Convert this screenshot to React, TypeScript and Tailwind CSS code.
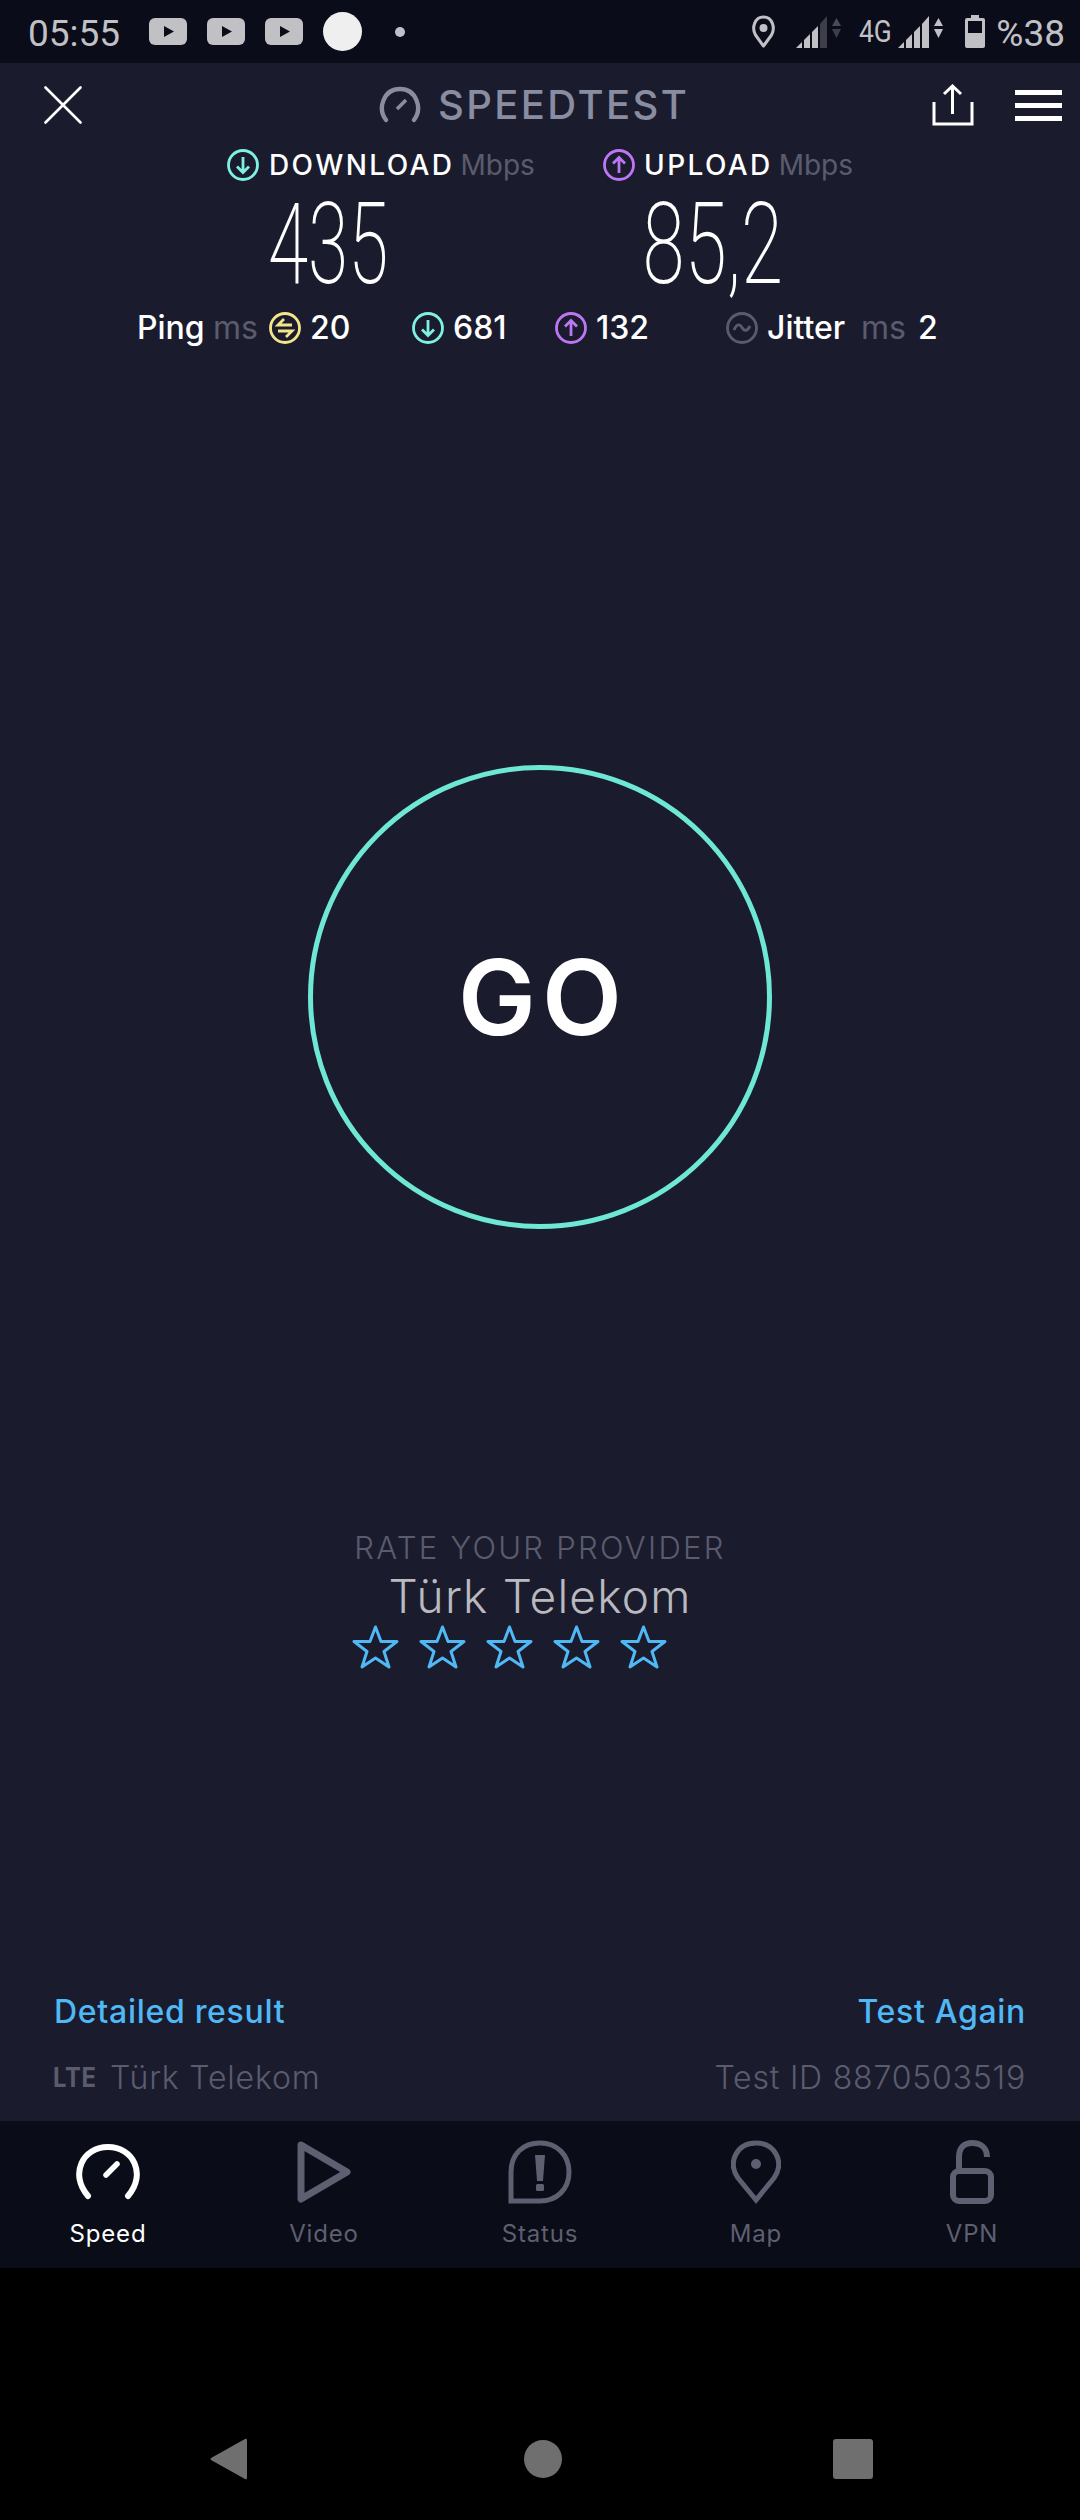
import type { ReactNode } from "react";

const SANS = "font-['Inter','Noto_Sans',sans-serif]";

function YoutubeBadge() {
    return (
        <svg width="38" height="27" viewBox="0 0 38 27">
            <rect width="38" height="27" rx="6" fill="#c1c0c5" />
            <path d="M15 8 L25 13.5 L15 19 Z" fill="#0a0c1a" />
        </svg>
    );
}

function Signal({ dimLast, dimArrows }: { dimLast?: boolean; dimArrows?: boolean }) {
    return (
        <svg width="46" height="33" viewBox="0 0 46 33">
            <path d="M0 33 L6 27 L6 33 Z" fill="#c1c0c5" />
            <path d="M8 33 L8 25 L14 19 L14 33 Z" fill="#c1c0c5" />
            <path d="M16 33 L16 17 L22 11 L22 33 Z" fill="#c1c0c5" />
            <path d="M24 33 L24 9 L31 1 L31 33 Z" fill={dimLast ? "#3d3e48" : "#c1c0c5"} />
            <path d="M36 11 L40.5 3 L45 11 Z" fill={dimArrows ? "#4a4b55" : "#c1c0c5"} />
            <path d="M36 14 L45 14 L40.5 23 Z" fill={dimArrows ? "#3d3e48" : "#c1c0c5"} />
        </svg>
    );
}

function StatusBar() {
    return (
        <div className="h-[63px] shrink-0 bg-[#0a0c1a] flex items-center pl-[28px] pr-[15px] font-['Roboto',sans-serif] text-[#c1c0c5]">
            <span className="text-[37px] leading-none w-[121px] mt-[3px]">05:55</span>
            <div className="flex items-center gap-[20px]">
                <YoutubeBadge />
                <YoutubeBadge />
                <YoutubeBadge />
            </div>
            <div className="w-[39px] h-[39px] rounded-full bg-[#efefef] ml-[20px]" />
            <div className="w-[10px] h-[10px] rounded-full bg-[#c1c0c5] ml-[33px]" />
            <div className="flex-1" />
            <svg width="25" height="33" viewBox="0 0 25 33" fill="none">
                <path d="M12.5 31 L4.5 20 C0.5 13 3.5 2 12.5 2 C21.5 2 24.5 13 20.5 20 Z" stroke="#c1c0c5" strokeWidth="3" strokeLinejoin="round" />
                <circle cx="12.5" cy="13" r="4" fill="#c1c0c5" />
            </svg>
            <div className="ml-[20px]">
                <Signal dimLast dimArrows />
            </div>
            <span className="text-[31px] leading-none ml-[17px] w-[39px] scale-x-[0.85] origin-left">4G</span>
            <Signal />
            <svg className="ml-[21px]" width="20" height="33" viewBox="0 0 20 33">
                <path d="M6 0 H14 V3 H18 Q20 3 20 5 V31 Q20 33 18 33 H2 Q0 33 0 31 V5 Q0 3 2 3 H6 Z" fill="#c1c0c5" />
                <rect x="3" y="6" width="14" height="12" fill="#0a0c1a" />
            </svg>
            <span className="text-[37px] leading-none ml-[11px] mt-[3px]">%38</span>
        </div>
    );
}

function RoundIcon({ color, children }: { color: string; children: ReactNode }) {
    return (
        <svg width="32" height="32" viewBox="0 0 32 32" fill="none" stroke={color} strokeWidth="2.8" className="shrink-0">
            <circle cx="16" cy="16" r="14.5" />
            {children}
        </svg>
    );
}

const DownIcon = () => (
    <RoundIcon color="#7ff0e2">
        <path d="M16 8 V23 M10 17.5 L16 23.5 L22 17.5" />
    </RoundIcon>
);

const UpIcon = () => (
    <RoundIcon color="#bd77f2">
        <path d="M16 24 V9 M10 14.5 L16 8.5 L22 14.5" />
    </RoundIcon>
);

function Header() {
    return (
        <div className="h-[70px] flex items-center pt-[13px] pl-[44px] pr-[18px]">
            <svg width="38" height="38" viewBox="0 0 38 38" stroke="#fff" strokeWidth="2.6" strokeLinecap="round">
                <path d="M1.5 1.5 L36.5 36.5 M36.5 1.5 L1.5 36.5" />
            </svg>
            <div className="flex-1 flex items-center pl-[297px]">
                <svg width="42" height="37" viewBox="0 0 42 37" fill="none" stroke="#8a8c9f" strokeWidth="4.4" strokeLinecap="round">
                    <path d="M7 34 C-2 22 5 3 21 3 C37 3 44 22 35 34" />
                    <path d="M18 23 L27 14" strokeWidth="3.6" strokeLinecap="butt" />
                </svg>
                <span className={`${SANS} text-[40px] leading-none font-medium text-[#8a8c9f] ml-[17px] tracking-[2.4px]`}>SPEEDTEST</span>
            </div>
            <svg width="42" height="42" viewBox="0 0 42 42" fill="none" stroke="#fff" strokeWidth="3">
                <path d="M2 18 V40 H40 V18" />
                <path d="M20.5 30 V3 M12 10 L20.5 2 L29 10" />
            </svg>
            <div className="w-[47px] ml-[41px] flex flex-col gap-[8px] mt-[1px]">
                <div className="h-[5px] bg-white" />
                <div className="h-[5px] bg-white" />
                <div className="h-[5px] bg-white" />
            </div>
        </div>
    );
}

function SpeedLabels() {
    return (
        <div className={`${SANS} flex items-center pl-[227px] mt-[16px] text-[28px] leading-[32px] font-medium text-white`}>
            <div className="w-[376px] flex items-center">
                <DownIcon />
                <span className="ml-[10px] tracking-[2.4px]">DOWNLOAD</span>
                <span className="ml-[6px] font-normal text-[#5a5c6e]">Mbps</span>
            </div>
            <UpIcon />
            <span className="ml-[9px] tracking-[2.4px]">UPLOAD</span>
            <span className="ml-[6px] font-normal text-[#5a5c6e]">Mbps</span>
        </div>
    );
}

function BigNumbers() {
    return (
        <div className="flex pl-[128px] mt-[8px] h-[110px] font-['Roboto',sans-serif] font-extralight text-white text-[114px] leading-[110px]">
            <div className="w-[400px] flex justify-center">
                <span className="scale-x-[0.64]">435</span>
            </div>
            <div className="w-[370px] flex justify-center">
                <span className="scale-x-[0.67]">85,2</span>
            </div>
        </div>
    );
}

function StatsRow() {
    return (
        <div className={`${SANS} flex items-center pl-[137px] mt-[12px] text-[32px] leading-[34px] font-medium text-white`}>
            <span className="w-[76px]">Ping</span>
            <span className="w-[56px] font-normal text-[#5a5c6e]">ms</span>
            <RoundIcon color="#f5e58a">
                <path d="M23 13 H9 L15 7 M9 19 H23 L17 25" />
            </RoundIcon>
            <span className="ml-[9px] w-[102px]">20</span>
            <DownIcon />
            <span className="ml-[9px] w-[102px]">681</span>
            <UpIcon />
            <span className="ml-[9px] w-[130px]">132</span>
            <RoundIcon color="#5a5c6e">
                <path d="M8 18 C11 11 14 12 16 15.5 C18 19 21 20 24 14" />
            </RoundIcon>
            <span className="ml-[9px] w-[94px]">Jitter</span>
            <span className="w-[57px] font-normal text-[#5a5c6e]">ms</span>
            <span>2</span>
        </div>
    );
}

function GoButton() {
    return (
        <div className="flex justify-center mt-[420px]">
            <div className={`${SANS} w-[464px] h-[464px] rounded-full border-[5px] border-[#6ee7d5] flex items-center justify-center pl-[6px] text-white text-[104px] leading-none font-semibold tracking-[6px]`}>
                GO
            </div>
        </div>
    );
}

function Star() {
    return (
        <svg width="47" height="44" viewBox="0 0 47 44" fill="none" stroke="#4fb8f5" strokeWidth="3" strokeLinejoin="round">
            <path d="M23.5 2 L29 16.5 L45 16.5 L32 26.5 L37 42 L23.5 33 L10 42 L15 26.5 L2 16.5 L18 16.5 Z" />
        </svg>
    );
}

function RateProvider() {
    return (
        <div className={`${SANS} flex flex-col items-center mt-[300px]`}>
            <div className="text-[31px] leading-[38px] font-light text-[#5a5c6e] tracking-[2.3px]">RATE YOUR PROVIDER</div>
            <div className="text-[46px] leading-[56px] font-light text-[#b9b9bf] mt-[1px] tracking-[1.2px]">Türk Telekom</div>
            <div className="flex gap-[20px] pr-[61px] mt-[1px]">
                <Star />
                <Star />
                <Star />
                <Star />
                <Star />
            </div>
        </div>
    );
}

function ResultFooter() {
    return (
        <div className={`${SANS} mt-auto px-[54px] pb-[25px]`}>
            <div className="flex justify-between text-[32px] leading-[36px] font-medium text-[#4fb8f5] tracking-[0.7px]">
                <span>Detailed result</span>
                <span>Test Again</span>
            </div>
            <div className="flex justify-between items-center mt-[30px] text-[32px] leading-[36px] font-light text-[#5a5c6e] tracking-[0.8px]">
                <div className="flex items-center">
                    <span className="text-[27px] font-bold scale-x-[0.88] origin-left w-[57px] -ml-[1px]">LTE</span>
                    <span>Türk Telekom</span>
                </div>
                <span>Test ID 8870503519</span>
            </div>
        </div>
    );
}

function TabItem({ label, active, children }: { label: string; active?: boolean; children: ReactNode }) {
    return (
        <div className={`flex flex-col items-center ${active ? "text-white" : "text-[#5e5f70]"}`}>
            <div className="h-[64px] flex items-center justify-center">{children}</div>
            <span className="text-[24px] leading-[30px] mt-[15px] font-normal tracking-[0.8px]">{label}</span>
        </div>
    );
}

function TabBar() {
    return (
        <div className={`${SANS} h-[147px] shrink-0 bg-[#0a0c18] grid grid-cols-5 pt-[19px]`}>
            <TabItem label="Speed" active>
                <svg width="64" height="56" viewBox="0 0 64 56" fill="none" stroke="#fff" strokeWidth="6" strokeLinecap="round">
                    <path d="M12 52 C-7 30 7 3 32 3 C57 3 71 30 52 52" />
                    <path d="M30 31 L41 20" strokeWidth="5.5" />
                </svg>
            </TabItem>
            <TabItem label="Video">
                <svg width="54" height="62" viewBox="0 0 54 62" fill="none" stroke="#5e5f70" strokeWidth="7" strokeLinejoin="round">
                    <path d="M4 4 L50 31 L4 58 Z" />
                </svg>
            </TabItem>
            <TabItem label="Status">
                <svg width="64" height="64" viewBox="0 0 64 64" fill="none" stroke="#5e5f70" strokeWidth="5">
                    <path d="M3 61 V32 C3 14 15 3 32 3 C49 3 61 15 61 32 C61 49 49 61 32 61 Z" />
                    <path d="M27 15 H37 L35 41 H29 Z" fill="#5e5f70" stroke="none" />
                    <rect x="28" y="44" width="8" height="7" rx="1.5" fill="#5e5f70" stroke="none" />
                </svg>
            </TabItem>
            <TabItem label="Map">
                <svg width="50" height="64" viewBox="0 0 50 64" fill="none" stroke="#5e5f70" strokeWidth="5">
                    <path d="M25 60 L7 38 C-4 22 6 3 25 3 C44 3 54 22 43 38 Z" />
                    <circle cx="25" cy="24" r="5" fill="#5e5f70" stroke="none" />
                </svg>
            </TabItem>
            <TabItem label="VPN">
                <svg width="44" height="64" viewBox="0 0 44 64" fill="none" stroke="#5e5f70" strokeWidth="6">
                    <path d="M9 30 V17 C9 8 14 3 22 3 C31 3 37 8 37 17" />
                    <rect x="3" y="31" width="38" height="30" rx="6" />
                </svg>
            </TabItem>
        </div>
    );
}

function NavBar() {
    return (
        <div className="flex-1 bg-black relative">
            <svg className="absolute left-[210px] top-[170px]" width="37" height="42" viewBox="0 0 37 42">
                <path d="M35 1 L1 20 Q0 21 1 22 L35 41 Q37 42 37 40 V2 Q37 0 35 1 Z" fill="#6f6f6f" />
            </svg>
            <div className="absolute left-[524px] top-[172px] w-[38px] h-[38px] rounded-full bg-[#6f6f6f]" />
            <div className="absolute left-[833px] top-[171px] w-[40px] h-[40px] rounded-[3px] bg-[#6f6f6f]" />
        </div>
    );
}

export default function App() {
    return (
        <div className="w-[1080px] h-[2520px] flex flex-col bg-black overflow-hidden">
            <StatusBar />
            <div className="h-[2058px] shrink-0 bg-[#1a1c2e] flex flex-col">
                <Header />
                <SpeedLabels />
                <BigNumbers />
                <StatsRow />
                <GoButton />
                <RateProvider />
                <ResultFooter />
            </div>
            <TabBar />
            <NavBar />
        </div>
    );
}
